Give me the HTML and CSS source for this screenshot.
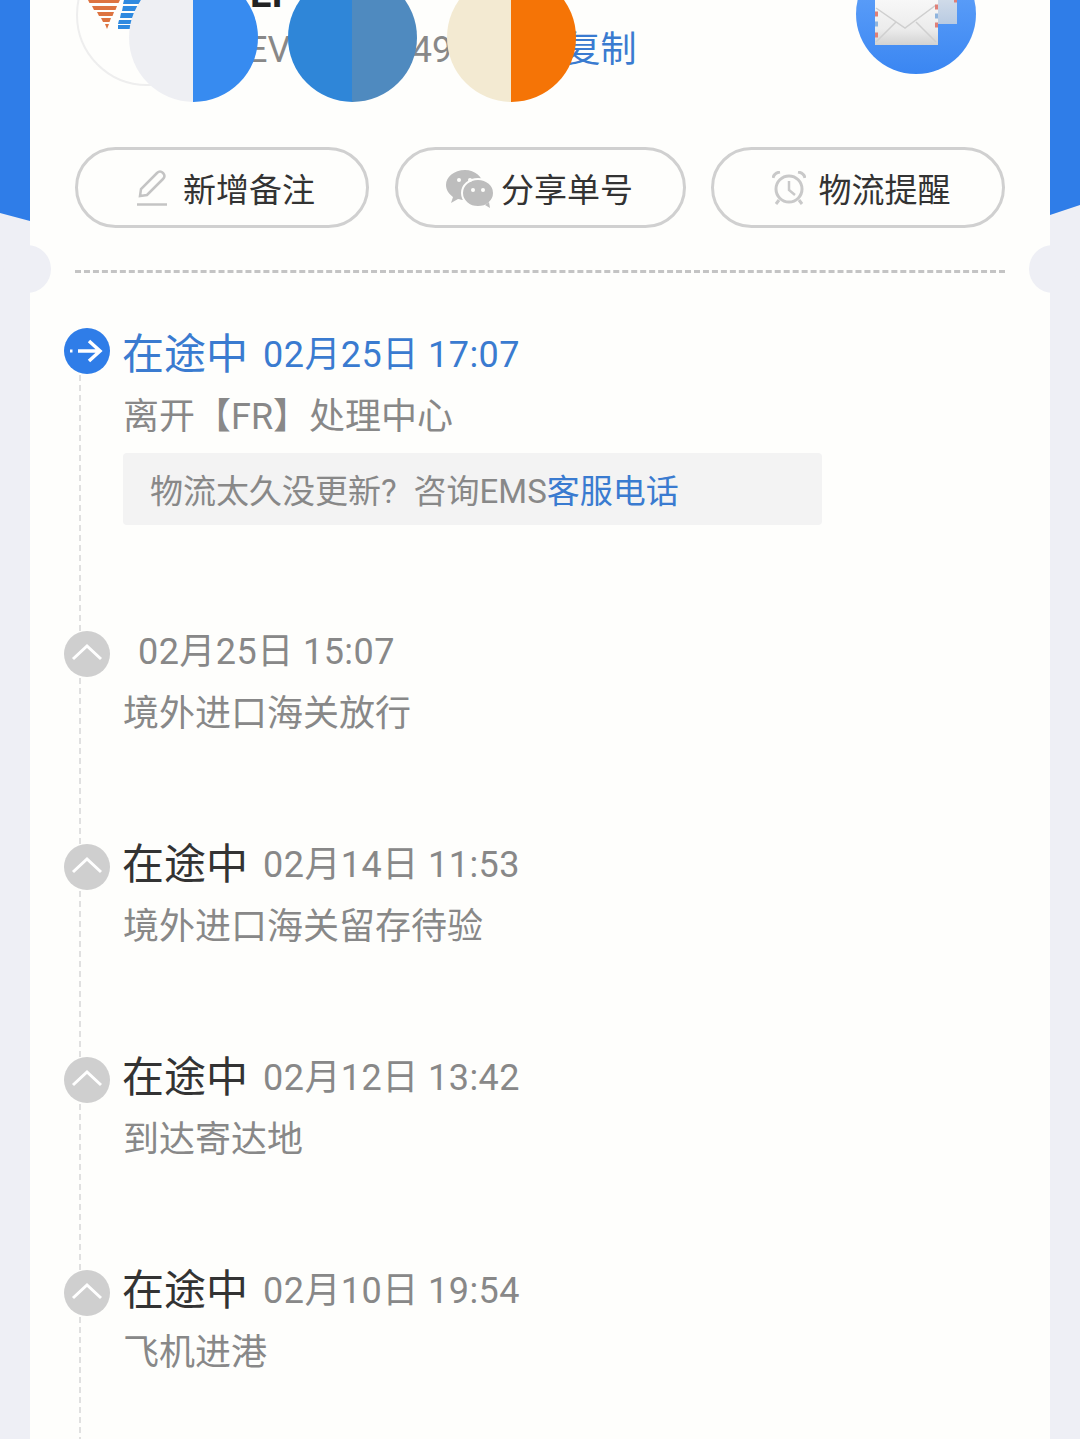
FILE: index.html
```html
<!DOCTYPE html>
<html lang="zh">
<head>
<meta charset="utf-8">
<title>物流详情</title>
<link rel="stylesheet" href="styles.css">
</head>
<body>
<div class="page">
  <div class="hero"></div>
  <main class="card">
    <span class="notch notch-left"></span>
    <span class="notch notch-right"></span>

    <section class="summary">
      <div class="logo">
        <svg class="logo-art" viewBox="0 0 54 30" width="54" height="30">
          <g fill="#dd7340"><path d="M0 0h32l-1.500 3H1.500zM4 6h25l-1.500 4H6zM9 12h17l-1.500 4H11zM13 18h10l-1.500 4H15zM17 24h4l-2 5z"/></g>
          <g fill="#2f8ae0"><path d="M36 0h17l-1 4H35zM35 6h16l-1 5H34zM33 13h15l-1 5H32zM31 20h14l-1 4H30zM30 25h13l-1 4H30z"/></g>
        </svg>
      </div>
      <div class="parcel">
        <div class="parcel-name">EI</div>
        <div class="parcel-no"><span>EV0000004900000</span><a class="link">复制</a></div>
      </div>
      <div class="mail">
        <svg viewBox="0 0 120 120" width="120" height="120">
          <defs>
            <linearGradient id="mailBg" x1="0" y1="0" x2="0" y2="1"><stop offset="0" stop-color="#6aa8fb"/><stop offset="1" stop-color="#3a86f2"/></linearGradient>
            <linearGradient id="envBg" x1="0" y1="0" x2="0" y2="1"><stop offset="0" stop-color="#fbfbfb"/><stop offset="0.7" stop-color="#ececec"/><stop offset="1" stop-color="#d2d2d2"/></linearGradient>
            <linearGradient id="envBack" x1="0" y1="0" x2="0" y2="1"><stop offset="0" stop-color="#e4e9ef"/><stop offset="1" stop-color="#b9cbe2"/></linearGradient>
          </defs>
          <circle cx="60" cy="60" r="60" fill="url(#mailBg)"/>
          <rect x="72" y="24" width="29" height="46" fill="url(#envBack)"/>
          <rect x="19" y="38" width="63" height="53" fill="url(#envBg)"/>
          <path d="M20 54 49 74 80 51M20 88l20-20M80 88 60 68" fill="none" stroke="#cfcfcf" stroke-width="1.500"/>
          <path d="M19 60h3M19 81h3M79 53h3M79 71h3M98 46h3" stroke="#e08078" stroke-width="5"/>
          <path d="M19 70h3M79 62h3" stroke="#8fb4dd" stroke-width="5"/>
        </svg>
      </div>
    </section>

    <span class="mask mask-a"></span>
    <span class="mask mask-b"></span>
    <span class="mask mask-c"></span>

    <nav class="actions">
      <a class="btn btn-a">
        <svg class="btn-icon" viewBox="0 0 32 36" width="32" height="36"><path d="M4 26 5 19 21 3c2-2 4-2 6 0s2 4 0 6L11 25z" fill="none" stroke="#c4c4c4" stroke-width="2.500"/><path d="M1 34.500h30" stroke="#c4c4c4" stroke-width="2.500"/></svg>
        <span>新增备注</span>
      </a>
      <a class="btn btn-b">
        <svg class="btn-icon" viewBox="0 0 50 40" width="50" height="40"><path d="M20 2C9 2 1 9 1 17c0 5 3 9 7 12l-2 6 7-4c2 .5 4 1 7 1 10 0 18-7 18-15S30 2 20 2z" fill="#bdbdbd"/><ellipse cx="33" cy="25" rx="16" ry="14" fill="#bdbdbd" stroke="#fefefc" stroke-width="2"/><path d="M40 37l5 3-1-6z" fill="#bdbdbd"/><circle cx="14" cy="12" r="2" fill="#fefefc"/><circle cx="25" cy="12" r="2" fill="#fefefc"/><circle cx="28" cy="22" r="2" fill="#fefefc"/><circle cx="38" cy="22" r="2" fill="#fefefc"/></svg>
        <span>分享单号</span>
      </a>
      <a class="btn btn-c">
        <svg class="btn-icon" viewBox="0 0 34 34" width="34" height="34"><circle cx="17" cy="18" r="13" fill="none" stroke="#c9c9c9" stroke-width="3"/><path d="M17 10v9l6 5" fill="none" stroke="#c9c9c9" stroke-width="2.500"/><path d="M1 7Q2 2 8 1M33 7Q32 2 26 1M7 29l-3 4M27 29l3 4" fill="none" stroke="#c9c9c9" stroke-width="3"/></svg>
        <span>物流提醒</span>
      </a>
    </nav>

    <hr class="divider">

    <ol class="timeline">
      <li class="event event-current event-first">
        <span class="dot dot-current">
          <svg viewBox="0 0 46 46" width="46" height="46"><path d="M14 23h22M25 13l11 10-11 10" fill="none" stroke="#fff" stroke-width="3.500"/><path d="M6 23h2.500" stroke="#fff" stroke-width="3"/></svg>
        </span>
        <div class="event-head"><span class="status">在途中</span><time class="when">02月25日 17:07</time></div>
        <p class="desc">离开【FR】处理中心</p>
        <div class="hint"><span class="hint-question">物流太久没更新?</span>咨询EMS<a class="link">客服电话</a></div>
      </li>
      <li class="event event-nostatus">
        <span class="dot"><svg viewBox="0 0 46 46" width="46" height="46"><path d="M9 28 23 15l14 13" fill="none" stroke="#fff" stroke-width="3"/></svg></span>
        <div class="event-head"><time class="when when-solo">02月25日 15:07</time></div>
        <p class="desc">境外进口海关放行</p>
      </li>
      <li class="event">
        <span class="dot"><svg viewBox="0 0 46 46" width="46" height="46"><path d="M9 28 23 15l14 13" fill="none" stroke="#fff" stroke-width="3"/></svg></span>
        <div class="event-head"><span class="status">在途中</span><time class="when">02月14日 11:53</time></div>
        <p class="desc">境外进口海关留存待验</p>
      </li>
      <li class="event">
        <span class="dot"><svg viewBox="0 0 46 46" width="46" height="46"><path d="M9 28 23 15l14 13" fill="none" stroke="#fff" stroke-width="3"/></svg></span>
        <div class="event-head"><span class="status">在途中</span><time class="when">02月12日 13:42</time></div>
        <p class="desc">到达寄达地</p>
      </li>
      <li class="event">
        <span class="dot"><svg viewBox="0 0 46 46" width="46" height="46"><path d="M9 28 23 15l14 13" fill="none" stroke="#fff" stroke-width="3"/></svg></span>
        <div class="event-head"><span class="status">在途中</span><time class="when">02月10日 19:54</time></div>
        <p class="desc">飞机进港</p>
      </li>
    </ol>
  </main>
</div>
</body>
</html>
```

FILE: styles.css
```css
* { box-sizing: border-box; }
html, body { margin: 0; padding: 0; }
body { font-family: Roboto, "Noto Sans CJK SC", sans-serif; color: #333; }

.page {
  position: relative;
  width: 1080px;
  height: 1439px;
  overflow: hidden;
  background: #eeeff5;
}
.hero {
  position: absolute;
  left: 0;
  top: 0;
  width: 1080px;
  height: 225px;
  background: #2f7de8;
  clip-path: polygon(0 0, 100% 0, 100% 205px, 1050px 215px, 30px 221px, 0 213px);
}
.card {
  position: relative;
  height: 1439px;
  margin: 0 30px;
  padding: 0 45px;
  background: #fefefc;
}
.notch {
  position: absolute;
  top: 245px;
  width: 48px;
  height: 48px;
  border-radius: 50%;
  background: #eeeff5;
}
.notch-left { left: -27px; }
.notch-right { right: -27px; }

/* summary */
.summary {
  display: flex;
  height: 147px;
  align-items: flex-start;
}
.logo {
  position: relative;
  flex: none;
  width: 142px;
  height: 142px;
  margin-top: -56px;
  margin-left: 1px;
  border: 2px solid #eee;
  border-radius: 50%;
}
.logo-art {
  position: absolute;
  left: 10px;
  top: 54px;
}
.parcel {
  flex: 1;
  margin-left: 29px;
  margin-top: -25px;
}
.parcel-name {
  margin-left: 3px;
  font-size: 38px;
  line-height: 38px;
  font-weight: 700;
  color: #222;
}
.parcel-no {
  display: flex;
  margin-top: 13px;
  font-size: 36px;
  line-height: 48px;
  color: #888;
}
.parcel-no .link { margin-left: 11px; }
.mail {
  flex: none;
  margin-top: -46px;
  margin-right: 29px;
  line-height: 0;
}
.link { color: #3a7bd0; }

.mask {
  position: absolute;
  top: -27px;
  width: 129px;
  height: 129px;
  border-radius: 50%;
}
.mask-a { left: 99px; background: linear-gradient(90deg, #eeeff3 50%, #378bf0 50%); }
.mask-b { left: 258px; background: linear-gradient(90deg, #2f86d8 50%, #4f8abf 50%); }
.mask-c { left: 417px; background: linear-gradient(90deg, #f3ead2 50%, #f57406 50%); }

/* actions */
.actions {
  display: flex;
  gap: 25.5px;
}
.btn {
  display: flex;
  flex: none;
  align-items: center;
  justify-content: center;
  height: 81px;
  border: 3px solid #d0d0d0;
  border-radius: 41px;
  font-size: 33px;
  color: #333;
}
.btn-a { width: 294px; gap: 15px; padding-left: 7px; }
.btn-b { width: 291px; gap: 6px; padding-right: 2px; }
.btn-c { width: 294px; gap: 13px; padding-left: 6px; }
.btn-icon { flex: none; }

.divider {
  height: 0;
  margin: 42px 0 0;
  border: 0;
  border-top: 3px dashed #c4c4c4;
}

/* timeline */
.timeline {
  list-style: none;
  margin: 0;
  padding: 0;
}
.event {
  position: relative;
  height: 213px;
  padding-left: 48px;
}
.event::before {
  content: "";
  position: absolute;
  left: 4px;
  top: 52px;
  bottom: -5px;
  border-left: 2px dashed #e0e0e0;
}
.event-first { height: 297px; margin-top: 56px; }
.event-first::before { top: 46px; }
.dot {
  position: absolute;
  left: -11px;
  top: 5px;
  width: 46px;
  height: 46px;
  line-height: 0;
  border-radius: 50%;
  background: #cfcfcf;
}
.dot-current { top: -1px; background: #2f7de8; }
.event-head {
  display: flex;
  align-items: center;
  height: 52px;
}
.status {
  margin-left: -1px;
  font-size: 42px;
  line-height: 52px;
  color: #333;
}
.event-current .status, .event-current .when { color: #3a7bd0; }
.when {
  margin-left: 15px;
  font-size: 36px;
  line-height: 52px;
  letter-spacing: 0.45px;
  color: #888;
}
.when-solo { margin-left: 15px; }
.desc {
  margin: 10px 0 0;
  font-size: 36px;
  line-height: 52px;
  color: #888;
}
.hint {
  width: 699px;
  height: 72px;
  margin-top: 10px;
  padding-left: 27px;
  background: #f3f3f3;
  border-radius: 4px;
  font-size: 33px;
  line-height: 78px;
  color: #888;
}
.hint-question { margin-right: 17px; }
```
